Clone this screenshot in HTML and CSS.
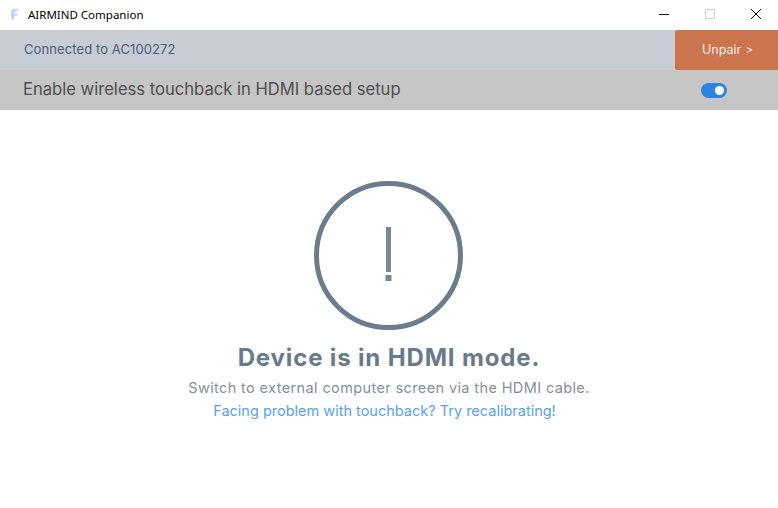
FILE: index.html
```html
<!DOCTYPE html>
<html lang="en">
<head>
  <meta charset="UTF-8" />
  <title>AIRMIND Companion</title>
  <link rel="stylesheet" href="styles.css">
</head>
<body>
  <div class="window">
    <div class="titlebar">
      <svg class="app-icon" width="10" height="13" viewBox="0 0 10 13">
        <path d="M1.5 1.5 L8.5 0.5 L8.5 3 L5 3.5 L5 5.5 L7.5 5.5 L7.5 8 L4.5 8.5 L3.5 12.5 L1.5 10.5 Z" fill="#c9dbf9"/>
        <path d="M1.5 1.5 L3 1.3 L3 11 L1.5 10.5 Z" fill="#b4cdf6"/>
      </svg>
      <span class="app-name">AIRMIND Companion</span>
      <div class="win-controls">
        <svg class="win-btn" width="46" height="30" viewBox="0 0 46 30"><path d="M18 14.5 H28" stroke="#000" fill="none"/></svg>
        <svg class="win-btn" width="46" height="30" viewBox="0 0 46 30"><rect x="18.5" y="9.5" width="9" height="9" stroke="#ccc" fill="none"/></svg>
        <svg class="win-btn" width="46" height="30" viewBox="0 0 46 30"><path d="M18 9 L28 19 M28 9 L18 19" stroke="#000" fill="none"/></svg>
      </div>
    </div>

    <div class="status-row">
      <span class="status-text">Connected to AC100272</span>
      <button class="unpair">Unpair <span class="chevron">&gt;</span></button>
    </div>

    <div class="touchback-row">
      <span class="touchback-label">Enable wireless touchback in HDMI based setup</span>
      <div class="toggle"><div class="knob"></div></div>
    </div>

    <div class="content">
      <svg class="alert-icon" width="149" height="149" viewBox="0 0 149 149">
        <circle cx="74.5" cy="74.5" r="72" fill="none" stroke="#6b7c8c" stroke-width="5"/>
        <rect x="72" y="46" width="5" height="45" fill="#7a8998"/>
        <rect x="71.5" y="94" width="6" height="6" fill="#7a8998"/>
      </svg>
      <h1>Device is in HDMI mode.</h1>
      <p class="hint">Switch to external computer screen via the HDMI cable.</p>
      <a class="link" href="#">Facing problem with touchback? Try recalibrating!</a>
    </div>
  </div>
</body>
</html>
```

FILE: styles.css
```css
* {
  margin: 0;
  padding: 0;
  box-sizing: border-box;
  font-family: 'Inter', 'Liberation Sans', sans-serif;
}

body {
  background-color: white;
  overflow: hidden;
}

.window {
  width: 778px;
  height: 508px;
  display: flex;
  flex-direction: column;
}

.titlebar {
  height: 30px;
  display: flex;
  align-items: center;
  padding-left: 10px;
}

.app-icon {
  margin-right: 8px;
  margin-top: -2px;
}

.app-name {
  font-family: 'Noto Sans', sans-serif;
  font-size: 11.5px;
  color: #000;
  margin-bottom: 1px;
}

.win-controls {
  margin-left: auto;
  display: flex;
  margin-right: -1px;
}

.status-row {
  height: 40px;
  background-color: #c8ccd4;
  display: flex;
  align-items: center;
  justify-content: space-between;
  padding-left: 24px;
}

.status-text {
  font-size: 13px;
  letter-spacing: 0.1px;
  color: #4d5f78;
  margin-bottom: 2px;
}

.unpair {
  width: 103px;
  height: 40px;
  border: none;
  border-radius: 2px 0 0 2px;
  background-color: #cb744e;
  color: #f8efe9;
  font-size: 12.5px;
  padding: 0 0 2px 2px;
}

.chevron {
  font-size: 11px;
  margin-left: 1px;
}

.touchback-row {
  height: 40px;
  background-color: #c5c5c5;
  display: flex;
  align-items: center;
  justify-content: space-between;
  padding: 0 51px 0 23px;
}

.touchback-label {
  font-size: 16.6px;
  color: #4f4f4f;
  margin-bottom: 2px;
}

.toggle {
  width: 26px;
  height: 15px;
  border-radius: 8px;
  background-color: #2f83e0;
  display: flex;
  align-items: center;
  justify-content: flex-end;
  padding-right: 3px;
}

.knob {
  width: 9px;
  height: 9px;
  border-radius: 50%;
  background-color: white;
}

.content {
  flex-grow: 1;
  display: flex;
  flex-direction: column;
  align-items: center;
  padding-top: 71px;
}

.alert-icon {
  margin-right: 1px;
  margin-bottom: 13px;
}

h1 {
  font-size: 24px;
  font-weight: 700;
  letter-spacing: 0.85px;
  color: #697a8a;
  margin-bottom: 7px;
}

.hint {
  font-size: 14.5px;
  letter-spacing: 0.38px;
  color: #858f9b;
  margin-bottom: 6px;
}

.link {
  font-size: 14.5px;
  color: #5aa2ea;
  text-decoration: none;
  margin-right: 9px;
}
```
